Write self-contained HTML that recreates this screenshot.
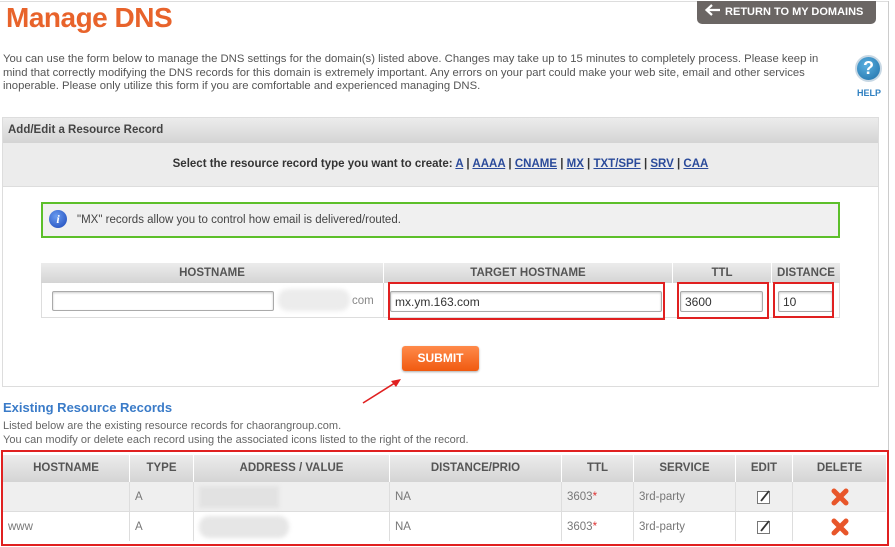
<!DOCTYPE html>
<html><head><meta charset="utf-8"><style>
*{margin:0;padding:0;box-sizing:border-box}
body{width:895px;height:547px;background:#fff;font-family:"Liberation Sans",Arial,sans-serif;position:relative;overflow:hidden;color:#555}
.a{position:absolute}
.hd{background:linear-gradient(#ececec,#d4d4d4)}
.th{position:absolute;top:0;height:100%;text-align:center;font-weight:bold;font-size:11.5px;color:#555;border-left:1px solid #fff}
.inp{position:absolute;background:#fff;border:1px solid #aaa;border-radius:2px;box-shadow:inset 0 1px 2px #ccc;font-size:12px;color:#333;padding:3px 4px}
.red{position:absolute;border:2px solid #e02020}
.td{position:absolute;top:0;height:100%;font-size:11.5px;color:#777;padding:0 5px;display:flex;align-items:center;border-left:1px solid #ddd}
a{color:#2a4a9a;text-decoration:underline}
</style></head><body>
<div class="a" style="left:0;top:1px;width:889px;height:1px;background:#ddd"></div>
<div class="a" style="left:888px;top:1px;width:1px;height:450px;background:#ccc"></div>
<div class="a" style="left:6px;top:2px;font-size:28px;font-weight:bold;color:#e8632b;letter-spacing:-0.5px">Manage DNS</div>
<div class="a" style="left:697px;top:1px;width:179px;height:23px;background:#6b6664;border-radius:0 0 5px 5px;color:#fff;font-size:11px;font-weight:bold;line-height:22px;padding-left:7px">
<svg width="18" height="12" viewBox="0 0 18 12" style="vertical-align:-1px"><path d="M16 6H3M8 1L2.5 6L8 11" stroke="#fff" stroke-width="2.2" fill="none"/></svg> RETURN TO MY DOMAINS</div>
<div class="a" style="left:3px;top:53px;width:840px;font-size:11.3px;line-height:13.5px;color:#555">You can use the form below to manage the DNS settings for the domain(s) listed above. Changes may take up to 15 minutes to completely process. Please keep in mind that correctly modifying the DNS records for this domain is extremely important. Any errors on your part could make your web site, email and other services inoperable. Please only utilize this form if you are comfortable and experienced managing DNS.</div>
<div class="a" style="left:855px;top:55px;width:27px;height:27px;border-radius:50%;background:radial-gradient(circle at 40% 35%,#5ab0e0,#1f6fa8);border:2px solid #c8d8e4;color:#fff;font-weight:bold;font-size:18px;text-align:center;line-height:23px">?</div>
<div class="a" style="left:857px;top:88px;font-size:9px;font-weight:bold;color:#2e7fc0">HELP</div>

<div class="a" style="left:2px;top:117px;width:877px;height:270px;border:1px solid #ddd"></div>
<div class="a hd" style="left:3px;top:118px;width:875px;height:25px;font-size:11.5px;font-weight:bold;color:#444;line-height:24px;padding-left:5px">Add/Edit a Resource Record</div>
<div class="a" style="left:3px;top:143px;width:875px;height:44px;background:#ececec;border-bottom:1px solid #ddd;text-align:center;font-size:11.5px;font-weight:bold;color:#333;line-height:42px">Select the resource record type you want to create: <a>A</a> | <a>AAAA</a> | <a>CNAME</a> | <a>MX</a> | <a>TXT/SPF</a> | <a>SRV</a> | <a>CAA</a></div>
<div class="a" style="left:41px;top:202px;width:799px;height:36px;background:#f0f0f0;border:2px solid #5cbf2a;font-size:11.5px;color:#444;line-height:32px;padding-left:34px">"MX" records allow you to control how email is delivered/routed.</div>
<div class="a" style="left:49px;top:210px;width:18px;height:18px;border-radius:50%;background:radial-gradient(circle at 40% 35%,#6a9cf0,#1a46b8);color:#fff;font:italic bold 12px 'Liberation Serif',serif;text-align:center;line-height:18px">i</div>

<div class="a" style="left:41px;top:263px;width:799px;height:55px;border:1px solid #ddd;border-top:none"></div>
<div class="a hd" style="left:41px;top:263px;width:799px;height:20px">
<div class="th" style="left:0;width:342px;line-height:20px;border:none">HOSTNAME</div>
<div class="th" style="left:342px;width:289px;line-height:20px">TARGET HOSTNAME</div>
<div class="th" style="left:631px;width:99px;line-height:20px">TTL</div>
<div class="th" style="left:730px;width:69px;line-height:20px">DISTANCE</div>
</div>
<div class="a" style="left:383px;top:283px;width:1px;height:35px;background:#ddd"></div>
<div class="inp" style="left:52px;top:291px;width:222px;height:20px"></div>
<div class="a" style="left:278px;top:289px;width:72px;height:22px;background:#ececec;border-radius:10px;filter:blur(2px)"></div>
<div class="a" style="left:352px;top:295px;font-size:11.5px;color:#888">com</div>
<div class="inp" style="left:390px;top:291px;width:272px;height:21px">mx.ym.163.com</div>
<div class="inp" style="left:680px;top:291px;width:83px;height:21px">3600</div>
<div class="inp" style="left:778px;top:291px;width:55px;height:21px">10</div>
<div class="red" style="left:388px;top:282px;width:277px;height:38px"></div>
<div class="red" style="left:677px;top:282px;width:92px;height:37px"></div>
<div class="red" style="left:773px;top:282px;width:61px;height:36px"></div>

<div class="a" style="left:402px;top:346px;width:77px;height:25px;border-radius:3px;background:linear-gradient(#ff8a4a,#f05a10);color:#fff;font-weight:bold;font-size:12px;text-align:center;line-height:25px;box-shadow:0 1px 2px #aaa">SUBMIT</div>
<svg class="a" style="left:355px;top:370px" width="60" height="40"><path d="M8 33L43 11" stroke="#e02020" stroke-width="1.6"/><path d="M46 9L36 11L41 17Z" fill="#e02020"/></svg>

<div class="a" style="left:3px;top:400px;font-size:13px;font-weight:bold;color:#3a7bc8">Existing Resource Records</div>
<div class="a" style="left:3px;top:419px;font-size:11px;line-height:14px;color:#666">Listed below are the existing resource records for chaorangroup.com.<br>You can modify or delete each record using the associated icons listed to the right of the record.</div>

<div class="red" style="left:1px;top:450px;width:888px;height:96px;border-width:2px"></div>
<div class="a hd" style="left:3px;top:455px;width:883px;height:27px">
<div class="th" style="left:0;width:126px;line-height:27px;border:none">HOSTNAME</div>
<div class="th" style="left:126px;width:64px;line-height:27px">TYPE</div>
<div class="th" style="left:190px;width:196px;line-height:27px">ADDRESS / VALUE</div>
<div class="th" style="left:386px;width:172px;line-height:27px">DISTANCE/PRIO</div>
<div class="th" style="left:558px;width:72px;line-height:27px">TTL</div>
<div class="th" style="left:630px;width:102px;line-height:27px">SERVICE</div>
<div class="th" style="left:732px;width:57px;line-height:27px">EDIT</div>
<div class="th" style="left:789px;width:94px;line-height:27px">DELETE</div>
</div>
<div class="a" style="left:3px;top:482px;width:883px;height:30px;background:#efefef;border-bottom:1px solid #ddd">
<div class="td" style="left:0;width:126px;border:none"></div>
<div class="td" style="left:126px;width:64px">A</div>
<div class="td" style="left:190px;width:196px"><div style="width:80px;height:22px;background:#e2e2e2;filter:blur(2px)"></div></div>
<div class="td" style="left:386px;width:172px">NA</div>
<div class="td" style="left:558px;width:72px">3603<span style="color:#d33">*</span></div>
<div class="td" style="left:630px;width:102px">3rd-party</div>
<div class="td" style="left:732px;width:57px;justify-content:center"><svg width="16" height="16"><rect x="1.5" y="2.5" width="12" height="12" fill="#fff" stroke="#777"/><path d="M5 12L13 2" stroke="#333" stroke-width="1.8"/></svg></div>
<div class="td" style="left:789px;width:94px;justify-content:center"><svg width="20" height="18"><path d="M4 3L16 15M16 3L4 15" stroke="#e8562a" stroke-width="5" stroke-linecap="round"/></svg></div>
</div>
<div class="a" style="left:3px;top:512px;width:883px;height:29px;background:#fff">
<div class="td" style="left:0;width:126px;border:none">www</div>
<div class="td" style="left:126px;width:64px">A</div>
<div class="td" style="left:190px;width:196px"><div style="width:90px;height:22px;background:#e6e6e6;border-radius:10px;filter:blur(2px)"></div></div>
<div class="td" style="left:386px;width:172px">NA</div>
<div class="td" style="left:558px;width:72px">3603<span style="color:#d33">*</span></div>
<div class="td" style="left:630px;width:102px">3rd-party</div>
<div class="td" style="left:732px;width:57px;justify-content:center"><svg width="16" height="16"><rect x="1.5" y="2.5" width="12" height="12" fill="#fff" stroke="#777"/><path d="M5 12L13 2" stroke="#333" stroke-width="1.8"/></svg></div>
<div class="td" style="left:789px;width:94px;justify-content:center"><svg width="20" height="18"><path d="M4 3L16 15M16 3L4 15" stroke="#e8562a" stroke-width="5" stroke-linecap="round"/></svg></div>
</div>
</body></html>
